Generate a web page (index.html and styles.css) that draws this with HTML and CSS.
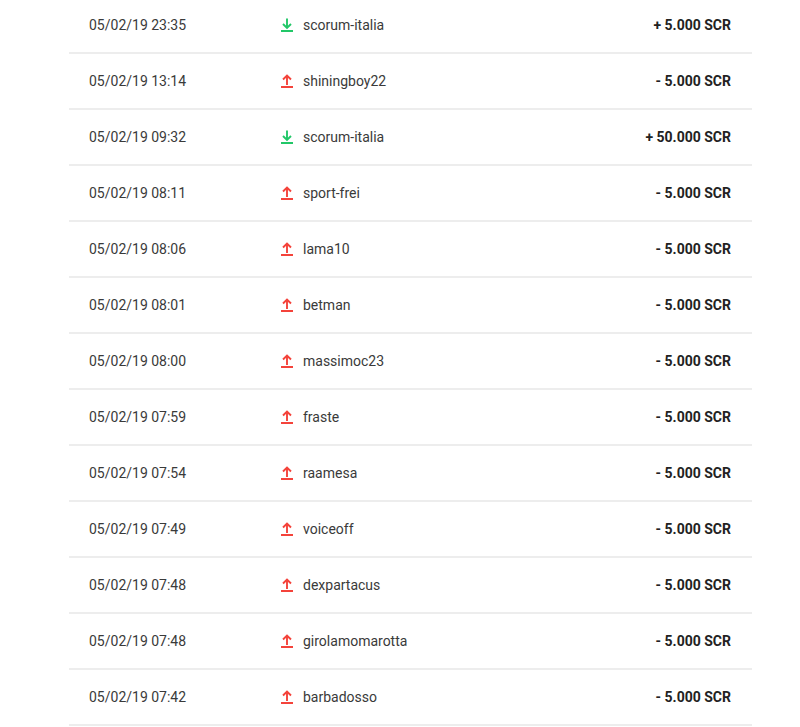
FILE: index.html
```html
<!DOCTYPE html>
<html>
<head>
<meta charset="utf-8">
<link rel="stylesheet" href="styles.css">
</head>
<body>
<div class="list">
  <div class="row"><span class="date">05/02/19 23:35</span><span class="user"><svg class="ico in" viewBox="0 0 12 14"><path d="M6 0.5V10M2 6l4 4 4-4M0 13h12"/></svg>scorum-italia</span><span class="amt">+ 5.000 SCR</span></div>
  <div class="row"><span class="date">05/02/19 13:14</span><span class="user"><svg class="ico out" viewBox="0 0 12 14"><path d="M6 11V1.5M2 5.5l4-4 4 4M0 13h12"/></svg>shiningboy22</span><span class="amt">- 5.000 SCR</span></div>
  <div class="row"><span class="date">05/02/19 09:32</span><span class="user"><svg class="ico in" viewBox="0 0 12 14"><path d="M6 0.5V10M2 6l4 4 4-4M0 13h12"/></svg>scorum-italia</span><span class="amt">+ 50.000 SCR</span></div>
  <div class="row"><span class="date">05/02/19 08:11</span><span class="user"><svg class="ico out" viewBox="0 0 12 14"><path d="M6 11V1.5M2 5.5l4-4 4 4M0 13h12"/></svg>sport-frei</span><span class="amt">- 5.000 SCR</span></div>
  <div class="row"><span class="date">05/02/19 08:06</span><span class="user"><svg class="ico out" viewBox="0 0 12 14"><path d="M6 11V1.5M2 5.5l4-4 4 4M0 13h12"/></svg>lama10</span><span class="amt">- 5.000 SCR</span></div>
  <div class="row"><span class="date">05/02/19 08:01</span><span class="user"><svg class="ico out" viewBox="0 0 12 14"><path d="M6 11V1.5M2 5.5l4-4 4 4M0 13h12"/></svg>betman</span><span class="amt">- 5.000 SCR</span></div>
  <div class="row"><span class="date">05/02/19 08:00</span><span class="user"><svg class="ico out" viewBox="0 0 12 14"><path d="M6 11V1.5M2 5.5l4-4 4 4M0 13h12"/></svg>massimoc23</span><span class="amt">- 5.000 SCR</span></div>
  <div class="row"><span class="date">05/02/19 07:59</span><span class="user"><svg class="ico out" viewBox="0 0 12 14"><path d="M6 11V1.5M2 5.5l4-4 4 4M0 13h12"/></svg>fraste</span><span class="amt">- 5.000 SCR</span></div>
  <div class="row"><span class="date">05/02/19 07:54</span><span class="user"><svg class="ico out" viewBox="0 0 12 14"><path d="M6 11V1.5M2 5.5l4-4 4 4M0 13h12"/></svg>raamesa</span><span class="amt">- 5.000 SCR</span></div>
  <div class="row"><span class="date">05/02/19 07:49</span><span class="user"><svg class="ico out" viewBox="0 0 12 14"><path d="M6 11V1.5M2 5.5l4-4 4 4M0 13h12"/></svg>voiceoff</span><span class="amt">- 5.000 SCR</span></div>
  <div class="row"><span class="date">05/02/19 07:48</span><span class="user"><svg class="ico out" viewBox="0 0 12 14"><path d="M6 11V1.5M2 5.5l4-4 4 4M0 13h12"/></svg>dexpartacus</span><span class="amt">- 5.000 SCR</span></div>
  <div class="row"><span class="date">05/02/19 07:48</span><span class="user"><svg class="ico out" viewBox="0 0 12 14"><path d="M6 11V1.5M2 5.5l4-4 4 4M0 13h12"/></svg>girolamomarotta</span><span class="amt">- 5.000 SCR</span></div>
  <div class="row"><span class="date">05/02/19 07:42</span><span class="user"><svg class="ico out" viewBox="0 0 12 14"><path d="M6 11V1.5M2 5.5l4-4 4 4M0 13h12"/></svg>barbadosso</span><span class="amt">- 5.000 SCR</span></div>
</div>
</body>
</html>
```
FILE: styles.css
```css
html, body {
  margin: 0;
  padding: 0;
  background: #fff;
}
body {
  font-family: Roboto, "Liberation Sans", sans-serif;
  font-size: 14px;
  color: #3a3a3a;
}
.list {
  margin: -2px 0 0 69px;
  width: 683px;
}
.row {
  display: grid;
  grid-template-columns: 192px 1fr auto;
  align-items: center;
  height: 54px;
  padding: 0 21px 0 20px;
  border-bottom: 2px solid #ededed;
}
.user {
  display: flex;
  align-items: center;
  gap: 10px;
}
.ico {
  width: 12px;
  height: 14px;
  fill: none;
  stroke-width: 1.9;
}
.ico.in { stroke: #22c768; }
.ico.out { stroke: #f4433b; }
.amt {
  font-weight: 700;
  color: #222;
  text-align: right;
}
```
